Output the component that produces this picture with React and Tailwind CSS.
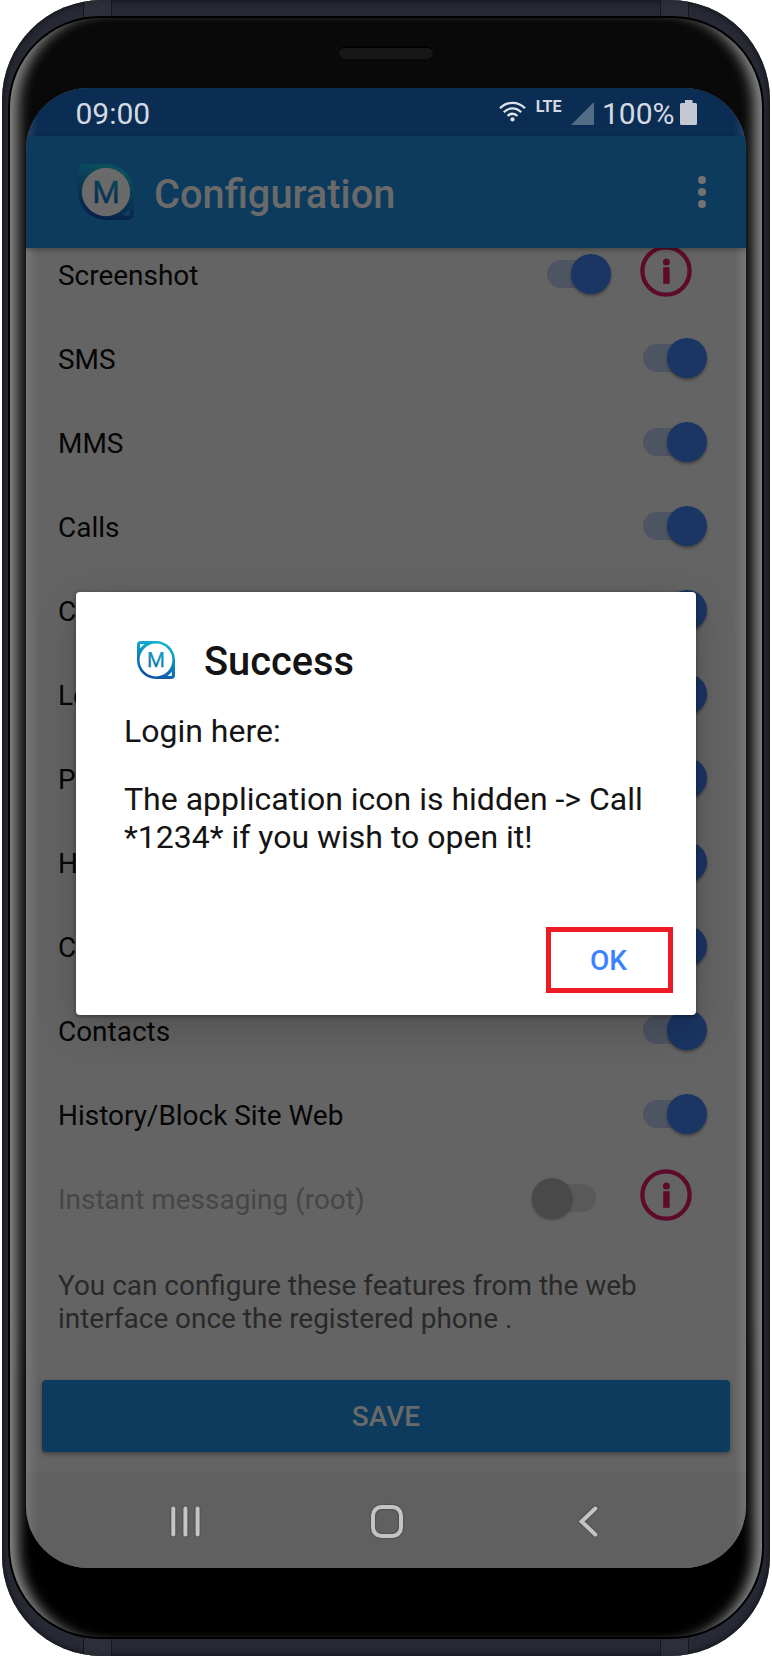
import React from "react";

const FEATURES = [
  { label: "Screenshot", on: true, info: true },
  { label: "SMS", on: true },
  { label: "MMS", on: true },
  { label: "Calls", on: true },
  { label: "Cam", on: true },
  { label: "Logs", on: true },
  { label: "Pics", on: true },
  { label: "Host", on: true },
  { label: "Chat", on: true },
  { label: "Contacts", on: true },
  { label: "History/Block Site Web", on: true },
  { label: "Instant messaging (root)", on: false, info: true },
];

function Logo({ id, className, top, bottom, paper, notch, size }) {
  return (
    <svg viewBox="0 0 38 38" className={className} aria-hidden="true">
      <defs>
        <linearGradient id={id} gradientUnits="userSpaceOnUse" x1="24" y1="2" x2="13" y2="36">
          <stop offset="0" stopColor={top} />
          <stop offset="1" stopColor={bottom} />
        </linearGradient>
      </defs>
      <path
        d="M4 0H19A19 19 0 0 1 38 19V34A4 4 0 0 1 34 38H19A19 19 0 0 1 0 19V4A4 4 0 0 1 4 0Z"
        fill={`url(#${id})`}
      />
      <circle cx="19" cy="19" r="16.4" fill={paper} />
      <path d="M3 3H7.6L3 7.6ZM35 35H30.4L35 30.4Z" fill={notch} />
      <text
        x="19"
        y="26.4"
        textAnchor="middle"
        fontFamily="Roboto, sans-serif"
        fontSize={size}
        fill={`url(#${id})`}
        stroke={`url(#${id})`}
        strokeWidth="0.25"
      >
        M
      </text>
    </svg>
  );
}

function Toggle({ on }) {
  return on ? (
    <div className="relative flex h-10 w-16 items-center justify-end">
      <div className="h-7 w-full rounded-full bg-[#4c5561]" />
      <div className="absolute right-0 size-10 rounded-full bg-[#1b3564] shadow-[0_2px_3px_rgba(0,0,0,0.35)]" />
    </div>
  ) : (
    <div className="relative flex h-10 w-16 items-center">
      <div className="h-7 w-full rounded-full bg-[#595959]" />
      <div className="absolute left-0 size-10 rounded-full bg-[#494949] shadow-[0_2px_3px_rgba(0,0,0,0.3)]" />
    </div>
  );
}

function InfoIcon() {
  return (
    <svg viewBox="0 0 52 52" className="mb-1.5 size-[52px]" aria-hidden="true">
      <circle cx="26" cy="26" r="23.6" fill="none" stroke="#5e0a2a" strokeWidth="4.3" />
      <circle cx="26.4" cy="17" r="3.5" fill="#5e0a2a" />
      <rect x="23.2" y="22.2" width="6.4" height="16.6" fill="#5e0a2a" />
    </svg>
  );
}

function FeatureRow({ label, on, info }) {
  return (
    <div className={`flex h-[84px] shrink-0 items-center pl-8 ${info ? "pr-[54px]" : "pr-[39px]"}`}>
      <span className={`flex-1 pt-[3px] text-[27.95px] leading-8 ${on ? "text-[#060606]" : "text-[#464646]"}`}>
        {label}
      </span>
      <Toggle on={on} />
      {info && (
        <div className={on ? "ml-[29px]" : "ml-[44px]"}>
          <InfoIcon />
        </div>
      )}
    </div>
  );
}

function StatusBar() {
  return (
    <div className="flex h-12 shrink-0 items-center bg-[#0b2d53] pl-[49.5px] pr-[49px] text-[#d5d9e1]">
      <span className="flex-1 pt-[3px] text-[30px] leading-9">09:00</span>
      <svg viewBox="0 0 27 21" className="-mt-px h-[21px] w-[27px]" aria-hidden="true">
        <g fill="none" stroke="#dfe3ea" strokeWidth="2.3">
          <path d="M1 7.2C8.2 0 18.8 0 26 7.2" />
          <path d="M4.8 11.2C9.8 6 17.2 6 22.2 11.2" />
          <path d="M8.6 15C11.4 12 15.6 12 18.4 15" />
        </g>
        <circle cx="13.5" cy="18.4" r="2.1" fill="#dfe3ea" />
      </svg>
      <span className="ml-[9.5px] mb-[11px] text-[16px] leading-5 font-bold">LTE</span>
      <svg viewBox="0 0 23 23" className="ml-[9.5px] mt-[3px] size-[23px]" aria-hidden="true">
        <path d="M23 0V23H0Z" fill="#546d87" />
      </svg>
      <span className="ml-2 pt-[3px] text-[30px] leading-9">100%</span>
      <svg viewBox="0 0 17 25" className="ml-[5.5px] mt-px h-[25px] w-[17px]" aria-hidden="true">
        <path d="M5 0H12.5V3H15.5Q17 3 17 4.5V23.5Q17 25 15.5 25H1.5Q0 25 0 23.5V4.5Q0 3 1.5 3H5Z" fill="#c3c8d3" />
      </svg>
    </div>
  );
}

function AppBar() {
  return (
    <header className="relative z-10 flex h-28 shrink-0 items-center bg-[#0d3b5e] pl-[52px] pr-10 shadow-[0_2px_5px_rgba(0,0,0,0.3)]">
      <Logo id="bar-logo" className="size-14" top="#0a505c" bottom="#08204a" paper="#6a6a6a" notch="#0e4360" size="21.5" />
      <h1 className="ml-5 flex-1 pt-[5px] text-[39.75px] leading-[48px] font-medium text-[#6a6a6a]">Configuration</h1>
      <div className="flex flex-col gap-1">
        <span className="size-2 rounded-full bg-[#727272]" />
        <span className="size-2 rounded-full bg-[#727272]" />
        <span className="size-2 rounded-full bg-[#727272]" />
      </div>
    </header>
  );
}

function NavBar() {
  return (
    <nav className="flex h-24 shrink-0 items-center bg-[#606060] pl-[145px] pt-[3px]">
      <svg viewBox="0 0 29 31" className="h-[31px] w-[29px] drop-shadow-[0_0_1px_rgba(0,0,0,0.4)]" aria-hidden="true">
        <g stroke="#c4c4c4" strokeWidth="4" strokeLinecap="round">
          <path d="M2.3 2.5V28.5" />
          <path d="M14.4 2.5V28.5" />
          <path d="M26.6 2.5V28.5" />
        </g>
      </svg>
      <svg viewBox="0 0 32 33" className="ml-[171px] h-[33px] w-8 drop-shadow-[0_0_1px_rgba(0,0,0,0.4)]" aria-hidden="true">
        <rect x="2" y="2" width="28" height="29" rx="8.5" fill="none" stroke="#c4c4c4" strokeWidth="4" />
      </svg>
      <svg viewBox="0 0 19 31" className="ml-[176px] h-[31px] w-[19px] drop-shadow-[0_0_1px_rgba(0,0,0,0.4)]" aria-hidden="true">
        <path d="M16.3 2.5L2.6 15.5L16.3 28.5" fill="none" stroke="#c4c4c4" strokeWidth="4" strokeLinecap="round" />
      </svg>
    </nav>
  );
}

function SuccessDialog() {
  return (
    <div className="absolute top-[504px] left-[50px] flex h-[423px] w-[620px] flex-col rounded-[4px] bg-white pt-9 text-[#141414] shadow-[0_14px_40px_rgba(0,0,0,0.2),0_1px_4px_rgba(0,0,0,0.4)]">
      <div className="flex h-16 items-center pl-[61px]">
        <Logo id="dialog-logo" className="size-[38px]" top="#10b4ce" bottom="#0d55a8" paper="#ffffff" notch="#d8f0f6" size="20.5" />
        <h2 className="ml-[29px] pt-1 text-[39.8px] leading-[48px] font-medium">Success</h2>
      </div>
      <div className="flex flex-col gap-[30px] pt-5 pl-12 text-[32px] leading-[38px]">
        <p>Login here:</p>
        <p>
          The application icon is hidden -&gt; Call
          <br />
          *1234* if you wish to open it!
        </p>
      </div>
      <button className="mt-auto mr-[23px] mb-[22px] h-[66px] w-[127px] self-end border-5 border-[#ed1c24] pt-0.5 pr-0.5 text-[28px] leading-8 font-medium text-[#3a82ff]">
        OK
      </button>
    </div>
  );
}

function AntennaBand({ className }) {
  return <div className={`absolute h-[18px] w-[29px] border-x border-black/50 bg-[#30333e]/60 ${className}`} />;
}

export default function App() {
  return (
    <div className="h-[1656px] w-[772px] bg-white px-0.5 font-['Roboto',sans-serif]">
      <div className="relative h-full overflow-hidden rounded-[100px] bg-[#272a34] px-1.5 pt-4 pb-[17px] shadow-[inset_0_0_5px_2px_#16181e]">
        <AntennaBand className="top-0 left-[81px]" />
        <AntennaBand className="top-0 right-[81px]" />
        <AntennaBand className="bottom-0 left-[81px]" />
        <AntennaBand className="right-[81px] bottom-0" />
        <div className="relative h-full rounded-[92px] bg-black p-0.5">
          <div className="flex h-full flex-col items-center rounded-[90px] bg-linear-to-b from-[#090909] from-80% to-black to-90% px-4 pt-7 shadow-[inset_17px_0_13px_-9px_#8a8a8a,inset_-17px_0_13px_-9px_#8a8a8a]">
            <div className="h-[13px] w-[94px] shrink-0 rounded-full border-t-2 border-black bg-[#171717]" />
            <div className="relative mt-[29px] flex h-[1480px] w-[720px] shrink-0 flex-col overflow-hidden rounded-[62px] bg-[#646464]">
              <StatusBar />
              <AppBar />
              <main className="-mt-4 flex flex-1 flex-col">
                {FEATURES.map((f) => (
                  <FeatureRow key={f.label} {...f} />
                ))}
                <p className="mt-[29px] w-[620px] pl-8 text-[27.95px] leading-[33px] text-[#292929]">
                  You can configure these features from the web interface once the registered phone .
                </p>
                <button className="mx-4 mt-[45px] h-[72px] rounded-[4px] bg-[#0d3b5e] pt-0.5 text-[28px] leading-8 font-medium text-[#6a6a6a] shadow-[0_2px_4px_rgba(0,0,0,0.35)]">
                  SAVE
                </button>
              </main>
              <NavBar />
              <div className="pointer-events-none absolute inset-y-0 left-0 w-3 bg-linear-to-r from-white/12 to-transparent" />
              <div className="pointer-events-none absolute inset-y-0 right-0 w-3 bg-linear-to-l from-white/12 to-transparent" />
              <SuccessDialog />
            </div>
          </div>
        </div>
      </div>
    </div>
  );
}
